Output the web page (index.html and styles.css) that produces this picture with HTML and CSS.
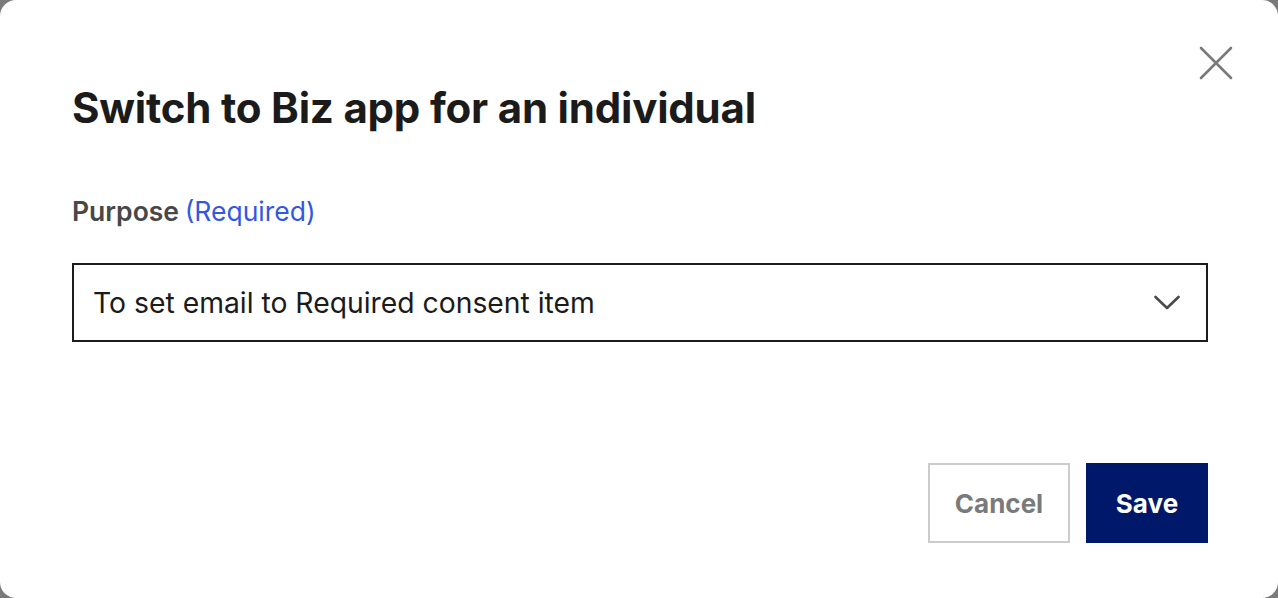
FILE: index.html
```html
<!DOCTYPE html>
<html lang="en">
<head>
<meta charset="utf-8">
<title>Switch to Biz app</title>
<link rel="stylesheet" href="styles.css">
</head>
<body>
<div class="modal">
  <button class="close" aria-label="Close">
    <svg width="36" height="36" viewBox="0 0 36 36"><path d="M3 3 L33 33 M33 3 L3 33" stroke="#7a7a7a" stroke-width="2.6" stroke-linecap="round" fill="none"/></svg>
  </button>
  <h1 class="title">Switch to Biz app for an individual</h1>
  <div class="field">
    <label class="label">Purpose <span class="req">(Required)</span></label>
    <div class="select">
      <span class="value">To set email to Required consent item</span>
      <svg class="chev" width="26" height="16" viewBox="0 0 26 16"><path d="M1.5 2 L13 13 L24.5 2" stroke="#4a4a4a" stroke-width="2.6" stroke-linecap="round" stroke-linejoin="round" fill="none"/></svg>
    </div>
  </div>
  <div class="actions">
    <button class="btn cancel">Cancel</button>
    <button class="btn save">Save</button>
  </div>
</div>
</body>
</html>
```
FILE: styles.css
```css
html, body {
  margin: 0;
  padding: 0;
  height: 100%;
}
body {
  background: #7b7b7b;
  font-family: Inter, "Noto Sans", sans-serif;
}
.modal {
  position: relative;
  box-sizing: border-box;
  width: 1278px;
  height: 598px;
  background: #fff;
  border-radius: 16px;
  padding: 80px 70px 0 72px;
  display: flex;
  flex-direction: column;
}
.close {
  position: absolute;
  top: 45px;
  right: 44px;
  padding: 0;
  border: 0;
  background: none;
  width: 36px;
  height: 36px;
  display: flex;
}
.title {
  margin: 0;
  font-size: 42px;
  font-weight: 700;
  color: #1b1b1b;
  line-height: 56px;
  letter-spacing: -0.2px;
}
.field {
  margin-top: 58px;
  display: flex;
  flex-direction: column;
}
.label {
  font-size: 26.5px;
  font-weight: 600;
  color: #474747;
  line-height: 34px;
  word-spacing: -1px;
}
.req {
  font-weight: 400;
  color: #3457e0;
}
.select {
  margin-top: 35px;
  box-sizing: border-box;
  height: 79px;
  border: 2px solid #1c1c1c;
  display: flex;
  align-items: center;
  justify-content: space-between;
  padding: 0 26px 0 19px;
}
.value {
  font-size: 28.3px;
  color: #1b1b1b;
}
.actions {
  margin-top: 121px;
  display: flex;
  justify-content: flex-end;
  gap: 16px;
}
.btn {
  box-sizing: border-box;
  height: 80px;
  font-family: Inter, "Noto Sans", sans-serif;
  font-size: 26px;
  font-weight: 700;
  padding: 0;
}
.cancel {
  width: 142px;
  background: #fff;
  border: 2px solid #cbcbcb;
  color: #7a7a7a;
}
.save {
  width: 122px;
  background: #00186a;
  border: 0;
  color: #fff;
}
```
